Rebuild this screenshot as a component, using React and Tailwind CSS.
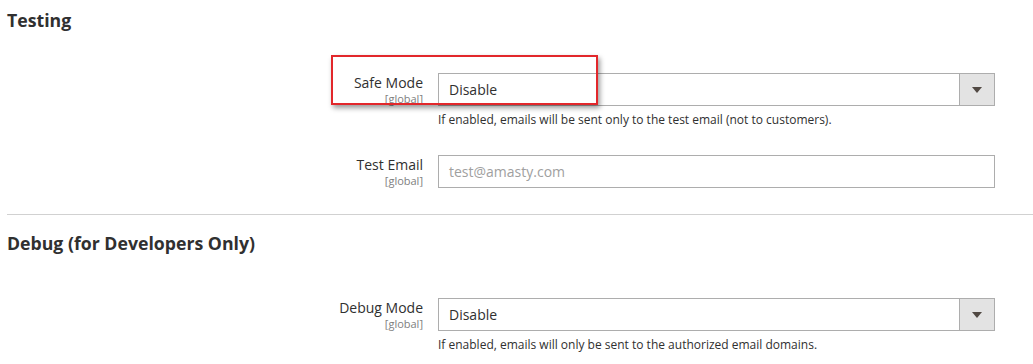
import React from 'react';

const font = { fontFamily: '"Open Sans", "Noto Sans", sans-serif' };

function Etiqueta({ texto }) {
  return (
    <div className="w-[416px] shrink-0 text-right">
      <div className="text-[14px] leading-[19px] text-[#303030]">{texto}</div>
      <div className="text-[11px] leading-[14px] text-[#808080]">[global]</div>
    </div>
  );
}

function Selector({ valor }) {
  return (
    <div className="flex h-[33px] w-[557px] border border-[#adadad] bg-white">
      <div className="flex flex-1 items-center pl-[10px] text-[14px] text-[#303030]">{valor}</div>
      <div className="flex w-[35px] items-center justify-center border-l border-[#adadad] bg-[#e3e3e3]">
        <svg width="10" height="6" viewBox="0 0 10 6">
          <path d="M0 0 H10 L5 6 Z" fill="#514943" />
        </svg>
      </div>
    </div>
  );
}

function Fila({ etiqueta, children, nota }) {
  return (
    <div className="flex gap-[15px]">
      <Etiqueta texto={etiqueta} />
      <div>
        {children}
        {nota && <p className="mt-[6px] text-[12px] leading-[16px] text-[#303030]">{nota}</p>}
      </div>
    </div>
  );
}

export default function App() {
  return (
    <div className="relative h-[364px] w-[1033px] overflow-hidden bg-white pl-[7px]" style={font}>
      <h2 className="pt-[9px] text-[17.7px] font-bold leading-[23px] text-[#303030]">Testing</h2>

      <div className="mt-[41px]">
        <Fila etiqueta="Safe Mode" nota="If enabled, emails will be sent only to the test email (not to customers).">
          <Selector valor="Disable" />
        </Fila>
      </div>

      <div className="mt-[27px]">
        <Fila etiqueta="Test Email">
          <div className="flex h-[33px] w-[557px] items-center border border-[#adadad] bg-white pl-[10px] text-[14px] text-[#a0a0a0]">
            test@amasty.com
          </div>
        </Fila>
      </div>

      <div className="mt-[26px] h-px bg-[#d1d1d1]" />

      <h2 className="mt-[17px] text-[17.7px] font-bold leading-[23px] text-[#303030]">Debug (for Developers Only)</h2>

      <div className="mt-[43px]">
        <Fila etiqueta="Debug Mode" nota="If enabled, emails will only be sent to the authorized email domains.">
          <Selector valor="Disable" />
        </Fila>
      </div>

      {/* recuadro rojo de anotación */}
      <div className="absolute left-[331px] top-[55px] h-[50px] w-[267px] border-2 border-[#e2272b] shadow-[2px_3px_5px_rgba(0,0,0,0.4)]" />
    </div>
  );
}
